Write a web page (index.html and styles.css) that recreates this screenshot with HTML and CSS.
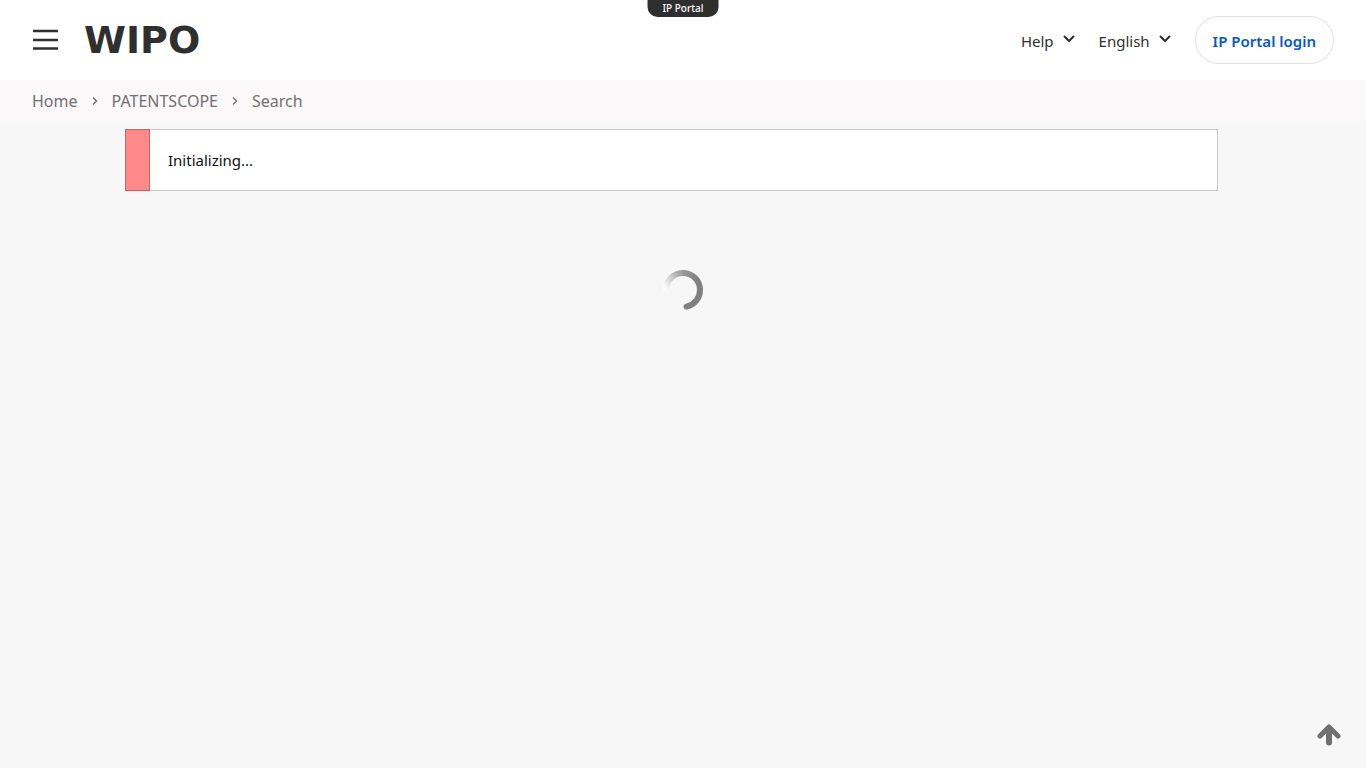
FILE: index.html
```html
<!DOCTYPE html>
<html lang="en">
<head>
	<meta charset="utf-8">
	<meta name="viewport" content="width=device-width, initial-scale=1">
	<title>WIPO - Search</title>
	<link rel="stylesheet" href="styles.css">
</head>
<body>

	<header class="navbar">
		<div class="navbar-left">
			<button type="button" class="menu-button" aria-label="Menu">
				<svg width="26" height="22" viewBox="0 0 26 22">
					<path d="M1 2h25M1 11h25M1 19.500h25" stroke="#2f2f2f" stroke-width="2.4"/>
				</svg>
			</button>
			<a href="#" class="logo">WIPO</a>
		</div>
		<div class="portal-tab">IP Portal</div>
		<nav class="navbar-right">
			<button type="button" class="nav-item">
				Help
				<svg class="chevron" width="12" height="8" viewBox="0 0 12 8"><path d="M1 1l5 5 5-5" fill="none" stroke="#2f2f2f" stroke-width="2"/></svg>
			</button>
			<button type="button" class="nav-item">
				English
				<svg class="chevron" width="12" height="8" viewBox="0 0 12 8"><path d="M1 1l5 5 5-5" fill="none" stroke="#2f2f2f" stroke-width="2"/></svg>
			</button>
			<button type="button" class="login">IP Portal login</button>
		</nav>
	</header>

	<nav class="breadcrumb" aria-label="Breadcrumb">
		<a href="#">Home</a>
		<svg width="6" height="8" viewBox="0 0 6 8"><path d="M1 0.5l3.5 3.5L1 7.5" fill="none" stroke="#707070" stroke-width="1.4"/></svg>
		<a href="#">PATENTSCOPE</a>
		<svg width="6" height="8" viewBox="0 0 6 8"><path d="M1 0.5l3.5 3.5L1 7.5" fill="none" stroke="#707070" stroke-width="1.4"/></svg>
		<a href="#">Search</a>
	</nav>

	<main>
		<div class="message">
			<div class="message-mark"></div>
			<p class="message-text">Initializing...</p>
		</div>
		<svg class="spinner" width="40" height="40" viewBox="0 0 40 40">
			<defs>
				<linearGradient id="fade" gradientUnits="userSpaceOnUse" x1="3" y1="20" x2="22" y2="5">
					<stop offset="0" stop-color="#fff"/>
					<stop offset="1" stop-color="#989898"/>
				</linearGradient>
				<linearGradient id="tail" gradientUnits="userSpaceOnUse" x1="20" y1="3" x2="34" y2="12">
					<stop offset="0" stop-color="#989898"/>
					<stop offset="1" stop-color="#808080"/>
				</linearGradient>
			</defs>
			<g fill="none" stroke-width="6">
				<path d="M3 20A17 17 0 0 1 20.2 3" stroke="url(#fade)"/>
				<path d="M20 3A17 17 0 0 1 37 20" stroke="url(#tail)"/>
				<path d="M37 19.8A17 17 0 0 1 23.5 36.6" stroke="#808080" stroke-linecap="round"/>
			</g>
		</svg>
	</main>

	<a href="#" class="to-top" aria-label="Back to top">
		<svg width="24" height="22" viewBox="0 0 24 22">
			<path d="M3 12L12 3l9 9" fill="none" stroke="#707070" stroke-width="5" stroke-linecap="round" stroke-linejoin="round"/>
			<path d="M12 5v13.500" fill="none" stroke="#707070" stroke-width="6" stroke-linecap="round"/>
		</svg>
	</a>

</body>
</html>
```
FILE: styles.css
```css
*{
	box-sizing: border-box;
}

body{
	margin: 0;
	min-height: 100vh;
	background-color: #f7f7f7;
	color: #111;
	font-family: "Noto Sans", sans-serif;
	font-size: 15px;
	line-height: 24px;
}

a{
	color: inherit;
	text-decoration: none;
}

button{
	padding: 0;
	border: 0;
	background: none;
	color: inherit;
	font: inherit;
	cursor: pointer;
}

svg{
	display: block;
}

/* top bar */
.navbar{
	position: relative;
	display: flex;
	align-items: center;
	justify-content: space-between;
	height: 80px;
	padding: 0 32px;
	background-color: #fff;
	color: #2f2f2f;
}
	.navbar-left{
		display: flex;
		align-items: center;
		gap: 26px;
	}

	.logo{
		font-family: "DejaVu Sans", sans-serif;
		font-size: 38px;
		font-weight: bold;
		line-height: 40px;
	}

	.portal-tab{
		position: absolute;
		top: 0;
		left: 50%;
		transform: translateX(-50%);
		padding: 0 15px 1px;
		border-radius: 0 0 10px 10px;
		background-color: #2f2f2f;
		color: #fff;
		font-size: 10px;
		font-weight: 500;
		line-height: 16px;
	}

	.navbar-right{
		display: flex;
		align-items: center;
		gap: 24px;
	}

	.nav-item{
		display: flex;
		align-items: center;
		gap: 9px;
		padding-top: 2px;
	}

	.chevron{
		margin-bottom: 4px;
	}

	.login{
		height: 48px;
		padding: 2px 17px 0;
		border: 1px solid #e0e0e0;
		border-radius: 24px;
		color: #0a57c2;
		font-weight: 600;
	}

.breadcrumb{
	display: flex;
	align-items: center;
	gap: 14px;
	height: 42px;
	padding: 0 32px;
	background-color: #faf8f9;
	color: #707070;
	font-size: 16px;
}

main{
	padding-top: 7px;
}

.message{
	display: flex;
	width: 80%;
	margin-left: 125px;
	border: 1px solid #c8c8c8;
	background-color: #fff;
}
	.message-mark{
		width: 25px;
		margin: -1px 0 -1px -1px;
		border: 1px solid #cc6262;
		background-color: #ff8a8a;
	}

	.message-text{
		margin: 0;
		padding: 18px;
	}

.spinner{
	margin: 79px auto 0;
}

.to-top{
	position: fixed;
	right: 25px;
	bottom: 22px;
}
```
